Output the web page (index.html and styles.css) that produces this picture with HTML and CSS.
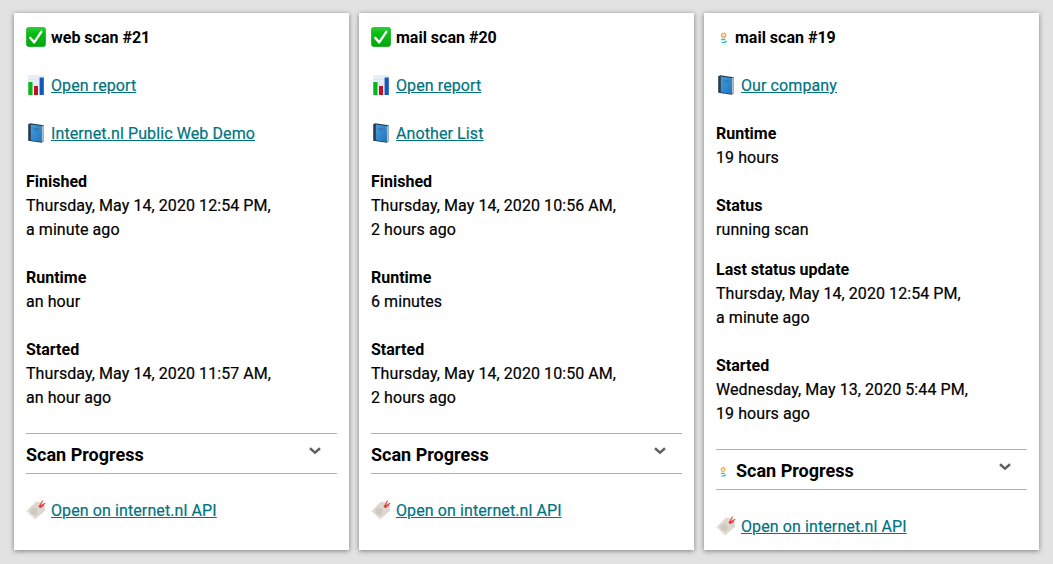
FILE: index.html
```html
<!DOCTYPE html>
<html lang="en">
<head>
<meta charset="utf-8">
<title>Scan monitor</title>
<link rel="stylesheet" href="styles.css">
</head>
<body>
<svg class="sprite" aria-hidden="true">
  <defs>
    <linearGradient id="green" x1="0" y1="0" x2="0" y2="1"><stop offset="0" stop-color="#2fd03c"/><stop offset=".3" stop-color="#08bd14"/><stop offset="1" stop-color="#00a80b"/></linearGradient>
    <linearGradient id="blue" x1="0" y1="0" x2="1" y2="1"><stop offset="0" stop-color="#469bd8"/><stop offset="1" stop-color="#1f77c0"/></linearGradient>
    <symbol id="check" viewBox="0 0 20 20">
      <rect x=".3" y=".3" width="19.4" height="19.4" rx="3" fill="url(#green)" stroke="#18a322" stroke-width=".6"/>
      <path d="M4.2 10.8 8.2 15.4 15.3 4.8" fill="none" stroke="#fff" stroke-width="2.4" stroke-linecap="round" stroke-linejoin="round"/>
    </symbol>
    <symbol id="chart" viewBox="0 0 20 20">
      <rect x="2" y="0" width="16" height="20" fill="#e7eef5"/>
      <path d="M2 4.5h16M2 9.5h16M2 14.5h16" stroke="#d4e0ea" stroke-width=".5"/>
      <rect x="2.3" y="7" width="4.2" height="13" fill="#09b51c"/>
      <rect x="8" y="11" width="4" height="9" fill="#c3121f"/>
      <rect x="13.6" y="2.5" width="4.2" height="17.5" fill="#1259bd"/>
    </symbol>
    <symbol id="book" viewBox="0 0 20 20">
      <path d="M2.2 1.2 4.3.2 17.8 2.2V18.1L15.8 19.8 2.2 17.7Z" fill="#263b4c"/>
      <path d="M15.2 3.2 17.8 2.4V17.8L15.6 19Z" fill="#b4c0c8"/>
      <path d="M4.8 1.6 15.8 3V19L4.8 17.3Z" fill="url(#blue)"/>
      <path d="M7 5.2 13.4 6M7.8 7 12 7.6" stroke="#2c75af" stroke-width=".9"/>
    </symbol>
    <symbol id="tag" viewBox="0 0 20 20">
      <path d="M.4 11.2 10.2 1.4 17.4 3 19.2 10.4 9 19.6Z" fill="#dcd7cf"/>
      <path d="M.4 11.2 9 19.6 9.8 18.9 1.2 10.4Z" fill="#eeeae5"/>
      <circle cx="8" cy="11.4" r="3.6" fill="#cbc4ba" opacity=".75"/>
      <circle cx="14.5" cy="6.3" r="1.7" fill="#d84242"/>
      <path d="M14.5 6.3C14 4.4 14.8 3 16.4 1M14.5 6.3 18.8 3.4M14.5 6.3 17.6 5.6" fill="none" stroke="#ed4145" stroke-width="1.2" stroke-linecap="round"/>
    </symbol>
    <symbol id="loader" viewBox="0 0 8 12">
      <circle cx="3.6" cy="3.2" r="2.1" fill="#fff" stroke="#f8a944" stroke-width="1.4"/>
      <path d="M3.6 2.4v1.6M2.8 3.2h1.6" stroke="#fbc37b" stroke-width=".6"/>
      <path d="M1.2 7.5H5.4M1.8 10.4H4.8L6.8 9.2" fill="none" stroke="#20bfd8" stroke-width="1.4"/>
    </symbol>
    <symbol id="chevron" viewBox="0 0 12 8">
      <path d="M1 1.2 6 5.6 11 1.2" fill="none" stroke="#606060" stroke-width="2.5"/>
    </symbol>
  </defs>
</svg>
<main class="scans">
  <article class="card">
    <h2 class="row title"><svg class="icon"><use href="#check"/></svg>web scan #21</h2>
    <p class="row"><svg class="icon"><use href="#chart"/></svg><a href="#">Open report</a></p>
    <p class="row"><svg class="icon"><use href="#book"/></svg><a href="#">Internet.nl Public Web Demo</a></p>
    <p class="block"><b>Finished</b><br>Thursday, May 14, 2020 12:54 PM,<br>a minute ago</p>
    <p class="block"><b>Runtime</b><br>an hour</p>
    <p class="block"><b>Started</b><br>Thursday, May 14, 2020 11:57 AM,<br>an hour ago</p>
    <h3 class="progress"><span>Scan Progress</span><svg class="chevron"><use href="#chevron"/></svg></h3>
    <p class="row"><svg class="icon"><use href="#tag"/></svg><a href="#">Open on internet.nl API</a></p>
  </article>
  <article class="card">
    <h2 class="row title"><svg class="icon"><use href="#check"/></svg>mail scan #20</h2>
    <p class="row"><svg class="icon"><use href="#chart"/></svg><a href="#">Open report</a></p>
    <p class="row"><svg class="icon"><use href="#book"/></svg><a href="#">Another List</a></p>
    <p class="block"><b>Finished</b><br>Thursday, May 14, 2020 10:56 AM,<br>2 hours ago</p>
    <p class="block"><b>Runtime</b><br>6 minutes</p>
    <p class="block"><b>Started</b><br>Thursday, May 14, 2020 10:50 AM,<br>2 hours ago</p>
    <h3 class="progress"><span>Scan Progress</span><svg class="chevron"><use href="#chevron"/></svg></h3>
    <p class="row"><svg class="icon"><use href="#tag"/></svg><a href="#">Open on internet.nl API</a></p>
  </article>
  <article class="card">
    <h2 class="row title"><svg class="loader"><use href="#loader"/></svg>mail scan #19</h2>
    <p class="row"><svg class="icon"><use href="#book"/></svg><a href="#">Our company</a></p>
    <p class="block"><b>Runtime</b><br>19 hours</p>
    <p class="block status"><b>Status</b><br>running scan</p>
    <p class="block"><b>Last status update</b><br>Thursday, May 14, 2020 12:54 PM,<br>a minute ago</p>
    <p class="block"><b>Started</b><br>Wednesday, May 13, 2020 5:44 PM,<br>19 hours ago</p>
    <h3 class="progress"><svg class="loader"><use href="#loader"/></svg><span>Scan Progress</span><svg class="chevron"><use href="#chevron"/></svg></h3>
    <p class="row"><svg class="icon"><use href="#tag"/></svg><a href="#">Open on internet.nl API</a></p>
  </article>
</main>
</body>
</html>
```
FILE: styles.css
```css
* {
  box-sizing: border-box;
}

body {
  margin: 0;
  background: #e2e2e2;
  color: #000;
  font: 16px/24px Roboto, "Liberation Sans", sans-serif;
  letter-spacing: .07px;
  -webkit-text-stroke: .2px;
}

.sprite {
  position: absolute;
  width: 0;
  height: 0;
}

.scans {
  display: grid;
  grid-template-columns: repeat(3, 335px);
  grid-template-rows: 537px;
  gap: 10px;
  padding: 13px 14px 14px;
}

.card {
  padding: 13px 12px 0;
  background: #fff;
  box-shadow: 0 1px 5px rgba(0, 0, 0, .45);
}

.row,
.block {
  margin: 0 0 24px;
}

.row {
  display: flex;
  align-items: center;
}

.row:last-child {
  margin-bottom: 0;
}

.title {
  font-size: 16px;
  font-weight: 700;
}

b,
.title,
.progress {
  letter-spacing: 0;
  -webkit-text-stroke: 0;
}

.block.status {
  margin-bottom: 16px;
}

.icon {
  flex: none;
  width: 20px;
  height: 20px;
  margin: 0 5px 2px 0;
}

.loader {
  flex: none;
  width: 8px;
  height: 12px;
  margin: 0 7px 0 4px;
}

.progress {
  display: flex;
  align-items: center;
  height: 41px;
  margin: -1px 0 25px;
  padding-top: 3px;
  border-top: 1px solid #b0b0b0;
  border-bottom: 1px solid #b0b0b0;
  font-size: 18px;
  font-weight: 700;
}

.progress .loader {
  width: 7px;
  margin: 1px 9px 0 4px;
}

.chevron {
  width: 12px;
  height: 8px;
  margin: 0 16px 9px auto;
}

a {
  color: #00747f;
  letter-spacing: .1px;
  text-decoration: underline;
}
```
